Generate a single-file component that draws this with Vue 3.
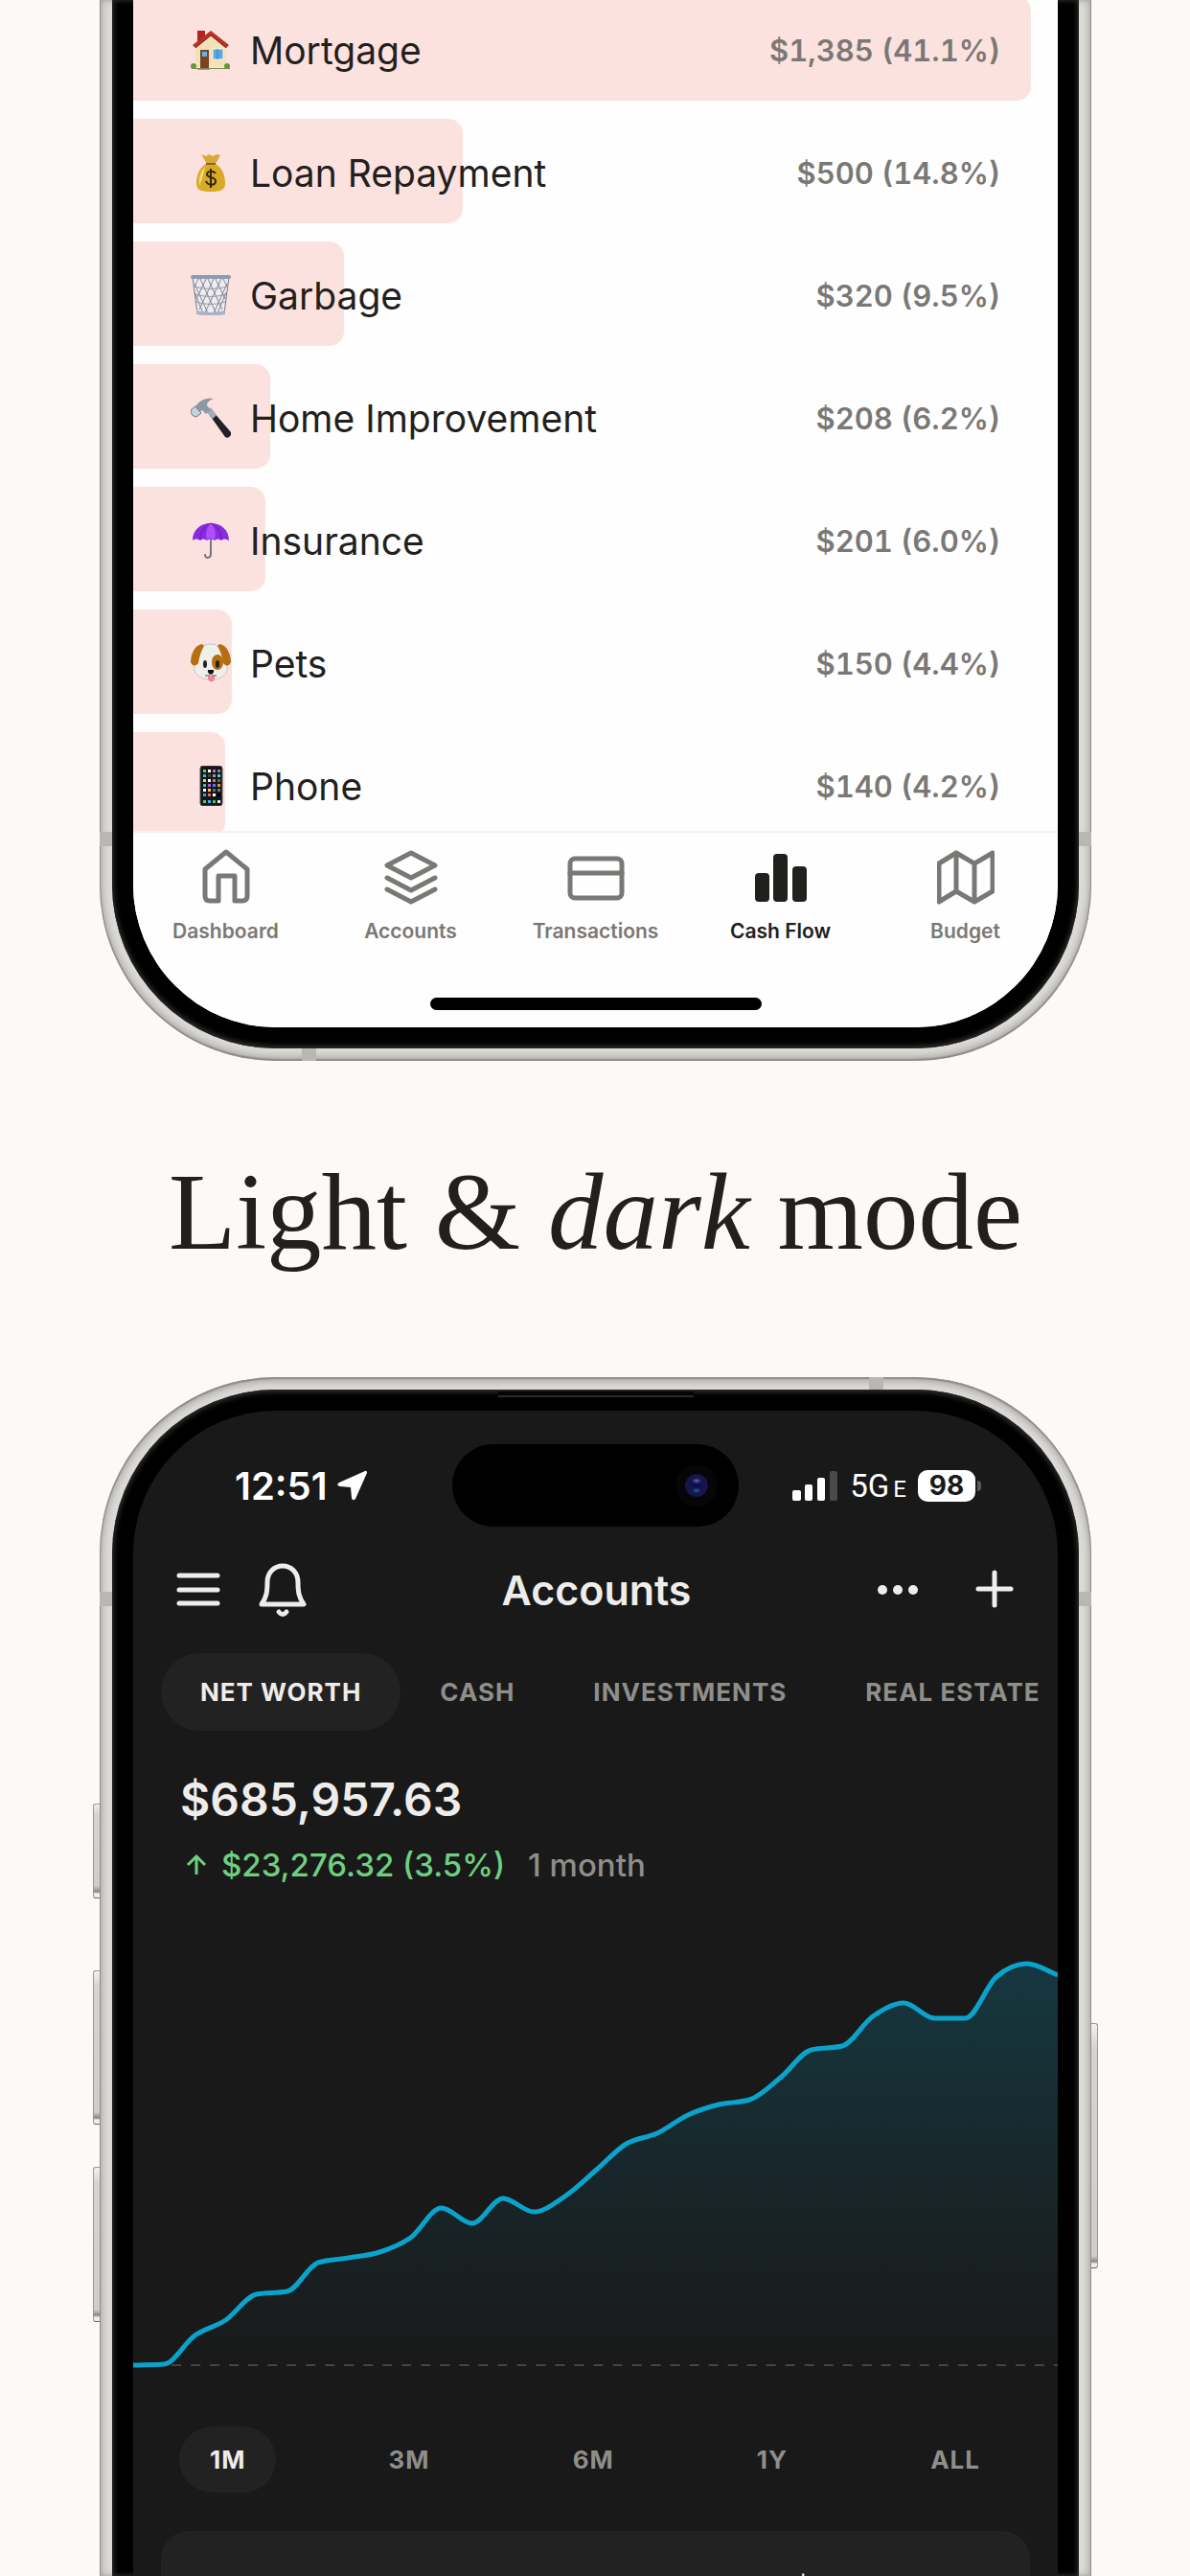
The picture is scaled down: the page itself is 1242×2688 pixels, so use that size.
<script setup>
import { computed } from "vue";

const categories = [
  { icon: "house", name: "Mortgage", amount: "$1,385 (41.1%)", bar: 97.1 },
  { icon: "money", name: "Loan Repayment", amount: "$500 (14.8%)", bar: 35.6 },
  { icon: "bin", name: "Garbage", amount: "$320 (9.5%)", bar: 22.8 },
  { icon: "hammer", name: "Home Improvement", amount: "$208 (6.2%)", bar: 14.8 },
  { icon: "umbrella", name: "Insurance", amount: "$201 (6.0%)", bar: 14.3 },
  { icon: "dog", name: "Pets", amount: "$150 (4.4%)", bar: 10.7 },
  { icon: "phone", name: "Phone", amount: "$140 (4.2%)", bar: 9.9 },
];

const navItems = ["Dashboard", "Accounts", "Transactions", "Cash Flow", "Budget"];
const activeNav = "Cash Flow";

const tabs = ["NET WORTH", "CASH", "INVESTMENTS", "REAL ESTATE"];
const activeTab = "NET WORTH";

const ranges = ["1M", "3M", "6M", "1Y", "ALL"];
const activeRange = "1M";

// App grid colours for the phone glyph
const dots = ["#4cd964", "#fff", "#b06ad0", "#888", "#3bb4f0", "#444", "#999", "#58c8d8", "#f5d742", "#fff", "#f06a5a", "#666", "#35c0d0", "#c050e0", "#3b8cf0", "#f09030", "#fff", "#f5c542", "#666", "#777", "#35a0e0", "#f06060", "#fff", "#000", "#4cd964", "#3bb4f0", "#4cc964", "#eee"];

// Net worth history, as distance above the baseline
const history = [
  0, 1, 31, 47, 74, 77, 107, 112, 118, 133, 164, 148, 174, 160, 176, 203, 231,
  242, 261, 272, 277, 300, 329, 333, 364, 378, 362, 362, 405, 419, 407,
];
const chartWidth = 964;
const baseline = 428;

// Monotone cubic interpolation through the points
const line = computed(() => {
  const step = chartWidth / (history.length - 1);
  const ys = history.map((v) => baseline - v);
  const slopes = ys.slice(1).map((y, i) => (y - ys[i]) / step);
  const tangents = ys.map((_, i) => {
    if (i === 0) return slopes[0];
    if (i === ys.length - 1) return slopes[i - 1];
    const a = slopes[i - 1];
    const b = slopes[i];
    if (a * b <= 0) return 0;
    return Math.sign(a) * Math.min(Math.abs(a), Math.abs(b), Math.abs(a + b) / 4) * 2;
  });
  let d = `M0 ${ys[0]}`;
  for (let i = 1; i < ys.length; i++) {
    const x0 = (i - 1) * step;
    const x1 = i * step;
    const c0 = ys[i - 1] + (tangents[i - 1] * step) / 3;
    const c1 = ys[i] - (tangents[i] * step) / 3;
    d += ` C${x0 + step / 3} ${c0} ${x1 - step / 3} ${c1} ${x1} ${ys[i]}`;
  }
  return d;
});
</script>

<template>
  <main class="page">
    <section class="phone phone-light">
      <span class="band band-left"></span>
      <span class="band band-right"></span>
      <span class="band band-bottom"></span>
      <div class="bezel">
        <div class="screen">
          <ul class="categories">
            <li v-for="item in categories" :key="item.name" class="category">
              <span class="category-bar" :style="{ width: item.bar + '%' }"></span>
              <svg class="glyph" viewBox="0 0 42 42" aria-hidden="true">
                <g v-if="item.icon === 'house'">
                  <rect x="7" y="1" width="8" height="13" fill="#b3261e" />
                  <path d="M21 4 5 18v21h32V18z" fill="#f3e2b8" />
                  <path d="M21 1 2 16l3 3L21 6l16 13 3-3z" fill="#b8302a" />
                  <path d="M5 19 21 6l16 13" fill="none" stroke="#7e1d18" />
                  <rect x="10" y="21" width="9" height="19" fill="#7c4120" />
                  <rect x="12" y="23" width="5" height="5" fill="#65b4ee" />
                  <rect x="23" y="20" width="11" height="11" fill="#5aa9e6" stroke="#fff6dc" />
                  <path d="M28 20v11" stroke="#3b7fbd" />
                  <path d="M9 40h11v2H7z" fill="#999" />
                  <circle cx="3" cy="38" r="3" fill="#5f9a32" />
                  <circle cx="38" cy="38" r="3" fill="#5f9a32" />
                  <path d="M1 40h40v1H1z" fill="#7a8a5a" />
                </g>
                <g v-else-if="item.icon === 'money'">
                  <path d="M11 2l5 2 3-2 4 2 4-2 4 1-5 9h-9z" fill="#d6a93e" />
                  <path d="M16 12h10c7 4 10 12 10 20 0 7-4 9-15 9S6 39 6 32c0-8 3-16 10-20z" fill="#d9a928" />
                  <path d="M15 15c-5 5-7 13-6 20 3-7 5-14 6-20z" fill="#f5dc70" />
                  <path d="M16 12h10" stroke="#8f6414" stroke-width="2" />
                  <path d="M26 22c-2-3-9-3-9 1s9 2 9 7-8 5-10 0M21 17v20" fill="none" stroke="#33280b" stroke-width="2" />
                </g>
                <g v-else-if="item.icon === 'bin'">
                  <path d="M2 2h38l-5 38q-14 3-28 0z" fill="#ececf2" />
                  <path d="M4 9l14 31M4 18l9 22M10 4l17 37M18 4l15 32M26 4l10 21M34 4l4 8M38 9 24 40M37 18l-9 22M32 4 14 41M24 4 9 36M16 4 6 25M8 4 4 12" stroke="#85858f" stroke-width="1" />
                  <path d="M4 12q17 5 34 0M5 20q16 5 32 0M6 28q15 5 30 0" fill="none" stroke="#9a9aa4" />
                  <path d="M2 2 7 40M40 2l-5 38" stroke="#777a85" />
                  <rect x="0" y="0" width="42" height="4" rx="2" fill="#8c9db3" />
                  <path d="M6 37q15 4 30 0v4q-15 3-30 0z" fill="#a6b4c8" />
                </g>
                <g v-else-if="item.icon === 'hammer'">
                  <path d="M19 17l4-3 19 22c1 4-3 7-6 5z" fill="#202226" />
                  <path d="M16 14l5-4 6 8-4 4z" fill="#a5adb7" />
                  <path d="M5 9C10 2 16 0 24 1c-5 2-7 4-7 7l4 5-5 4-4-4-4 3-5-5z" fill="#8d98a5" />
                  <path d="M0 13l5-4 6 7-5 4q-6-1-6-7z" fill="#c5d3e0" stroke="#66717e" />
                </g>
                <g v-else-if="item.icon === 'umbrella'">
                  <path d="M21 20v15c0 5-6 5-6 1" fill="none" stroke="#77747a" stroke-width="2" stroke-linecap="round" />
                  <path d="M2 21C2 10 10 3 21 3s19 7 19 18c-3-2-6-2-8 0-3-2-5-2-7 0-3-2-5-2-8 0-3-2-5-2-7 0-3-2-5-2-8 0z" fill="#8a2be2" />
                  <path d="M17 20c-2-7 0-13 4-17 4 4 6 10 4 17-3-2-5-2-8 0z" fill="#b050ff" />
                  <path d="M10 20c0-8 4-14 11-17M32 20c0-8-4-14-11-17" fill="none" stroke="#641bb0" />
                </g>
                <g v-else-if="item.icon === 'dog'">
                  <path d="M21 1c10 0 14 7 15 15s4 11 1 15c-3 5-9 7-16 7S8 36 5 31s0-7 1-15S11 1 21 1z" fill="#efefec" stroke="#c9c6c0" />
                  <path d="M12 1C4 2 0 12 0 20c2 5 6 4 8 1 1-7 3-13 6-18zM30 1c8 1 12 11 12 19-2 5-6 4-8 1-1-7-3-13-6-18z" fill="#b76d12" />
                  <ellipse cx="28" cy="20" rx="6" ry="8" fill="#b76d12" />
                  <ellipse cx="15" cy="22" rx="2" ry="4" fill="#222" />
                  <ellipse cx="28" cy="22" rx="2" ry="4" fill="#222" />
                  <path d="M18 34h7v4q-3 5-7 0z" fill="#ef8793" />
                  <path d="M18 28h6q1 3-3 5-4-2-3-5z" fill="#111" />
                  <path d="M15 34q4 1 6-2 2 3 6 2" fill="none" stroke="#555" />
                </g>
                <g v-else>
                  <rect x="10" y="0" width="23" height="42" rx="3" fill="#15151a" stroke="#555" />
                  <rect
                    v-for="(color, i) in dots"
                    :key="i"
                    :x="13 + (i % 4) * 5"
                    :y="4 + Math.floor(i / 4) * 5 + (i > 23 ? 2 : 0)"
                    width="3"
                    height="3"
                    :fill="color"
                  />
                </g>
              </svg>
              <span class="category-name">{{ item.name }}</span>
              <span class="category-amount">{{ item.amount }}</span>
            </li>
          </ul>

          <nav class="bottom-nav">
            <div class="nav-items">
              <a
                v-for="item in navItems"
                :key="item"
                href="#"
                class="nav-item"
                :class="{ active: item === activeNav }"
              >
                <svg class="nav-icon" viewBox="0 0 60 60" aria-hidden="true">
                  <path v-if="item === 'Dashboard'" d="M8 22 30 4l22 18v28q0 5-5 5h-8V29H22v26h-9q-5 0-5-5z" />
                  <g v-else-if="item === 'Accounts'">
                    <path d="M30 5 5 18l25 13 25-13z" />
                    <path d="M5 31l25 13 25-13M5 43l25 13 25-13" />
                  </g>
                  <g v-else-if="item === 'Transactions'">
                    <rect x="3" y="11" width="54" height="41" rx="5" />
                    <path d="M3 26h54" />
                  </g>
                  <g v-else-if="item === 'Cash Flow'" class="solid">
                    <rect x="3" y="26" width="15" height="30" rx="4" />
                    <rect x="22" y="6" width="15" height="50" rx="4" />
                    <rect x="42" y="19" width="15" height="37" rx="4" />
                  </g>
                  <path v-else d="M2 16 20 5l19 11L58 5v40L39 56 20 45 2 56zM20 5v40M39 16v40" />
                </svg>
                <span>{{ item }}</span>
              </a>
            </div>
            <div class="home-indicator"></div>
          </nav>
        </div>
      </div>
    </section>

    <h1 class="headline">Light &amp; <em>dark</em> mode</h1>

    <section class="phone phone-dark">
      <span class="band band-left"></span>
      <span class="band band-right"></span>
      <span class="band band-top"></span>
      <span class="side-button action"></span>
      <span class="side-button volume-up"></span>
      <span class="side-button volume-down"></span>
      <span class="side-button power"></span>
      <div class="bezel">
        <span class="earpiece"></span>
        <div class="screen">
          <div class="status-bar">
            <div class="clock">
              <span>12:51</span>
              <svg class="location" viewBox="0 0 32 32" aria-hidden="true">
                <path d="M29 1 2 13q-4 3 1 4l11 1 1 11q1 4 4 1L31 3q0-3-2-2z" />
              </svg>
            </div>
            <div class="island">
              <span class="camera"></span>
            </div>
            <div class="signal">
              <svg class="cell-bars" viewBox="0 0 47 31" aria-hidden="true">
                <rect x="0" y="20" width="9" height="11" rx="2" />
                <rect x="13" y="14" width="8" height="17" rx="2" />
                <rect x="26" y="7" width="8" height="24" rx="2" />
                <rect x="39" y="0" width="8" height="31" rx="2" class="dim" />
              </svg>
              <span class="network">5G<small>E</small></span>
              <span class="battery">98</span>
              <span class="battery-tip"></span>
            </div>
          </div>

          <header class="app-bar">
            <div class="app-actions">
              <button class="icon-button" aria-label="Menu">
                <svg viewBox="0 0 60 60"><path d="M10 15h40M10 30h40M10 44h40" /></svg>
              </button>
              <button class="icon-button" aria-label="Notifications">
                <svg viewBox="0 0 60 60">
                  <path d="M8 45c5-7 6-13 6-23 0-10 7-17 16-17s16 7 16 17c0 10 1 16 6 23z" />
                  <path d="M26 53q4 5 8 0" />
                </svg>
              </button>
            </div>
            <h2>Accounts</h2>
            <div class="app-actions end">
              <button class="icon-button" aria-label="More">
                <svg viewBox="0 0 60 60" class="more">
                  <circle cx="14" cy="30" r="5" />
                  <circle cx="30" cy="30" r="5" />
                  <circle cx="46" cy="30" r="5" />
                </svg>
              </button>
              <button class="icon-button" aria-label="Add">
                <svg viewBox="0 0 60 60"><path d="M13 29h34M30 12v34" /></svg>
              </button>
            </div>
          </header>

          <div class="tabs">
            <button v-for="tab in tabs" :key="tab" class="tab" :class="{ active: tab === activeTab }">
              {{ tab }}
            </button>
          </div>

          <div class="summary">
            <p class="total">$685,957.63</p>
            <p class="change">
              <svg class="up" viewBox="0 0 24 24" aria-hidden="true">
                <path d="M12 22V3M3 12l9-9 9 9" />
              </svg>
              <span class="gain">$23,276.32 (3.5%)</span>
              <span class="period">1 month</span>
            </p>
          </div>

          <svg class="chart" viewBox="0 0 964 440" preserveAspectRatio="none" aria-hidden="true">
            <defs>
              <linearGradient id="area" x1="0" y1="0" x2="0" y2="1">
                <stop offset="0" stop-color="#0aa3cb" stop-opacity="0.22" />
                <stop offset="0.5" stop-color="#0aa3cb" stop-opacity="0.1" />
                <stop offset="1" stop-color="#0aa3cb" stop-opacity="0" />
              </linearGradient>
            </defs>
            <path :d="line + ` V${baseline} H0 Z`" fill="url(#area)" />
            <path :d="`M0 ${baseline} H964`" class="zero" />
            <path :d="line" class="line" />
          </svg>

          <div class="ranges">
            <button
              v-for="range in ranges"
              :key="range"
              class="range"
              :class="{ active: range === activeRange }"
            >
              {{ range }}
            </button>
          </div>

          <article class="card">
            <h3>Cash</h3>
            <span>$62,485.09</span>
          </article>
        </div>
      </div>
    </section>
  </main>
</template>

<style>
body {
  margin: 0;
  background: #fbfaf8;
}
</style>

<style scoped>
.page {
  display: flex;
  flex-direction: column;
  height: 100vh;
  padding: 0 103px 0 104px;
  box-sizing: border-box;
  overflow: hidden;
  background: #fbfaf8;
  color: #22201d;
  font-family: Inter, "Liberation Sans", sans-serif;
}

ul,
p,
h1,
h2,
h3 {
  margin: 0;
  padding: 0;
}

button {
  border: 0;
  padding: 0;
  background: none;
  font: inherit;
  color: inherit;
}

/* Phone body */
.phone {
  position: relative;
  background: #dddbd8;
}

.phone-light {
  flex: none;
  padding: 0 13px 13px;
  border-radius: 0 0 184px 184px;
  box-shadow: inset 0 -1px 1px 1px #8f8d8a, inset 0 -2px 8px 2px #a5a3a0;
}

.phone-dark {
  flex: 1;
  min-height: 0;
  display: flex;
  padding: 13px 13px 0;
  border-radius: 184px 184px 0 0;
  box-shadow: inset 0 1px 1px 1px #8f8d8a, inset 0 2px 8px 2px #a5a3a0;
}

.bezel {
  position: relative;
  background: #000;
}

.phone-light .bezel {
  padding: 0 22px 22px;
  border-radius: 0 0 171px 171px;
  box-shadow: inset 0 -1px 5px 2px #2c2c2c;
}

.phone-dark .bezel {
  flex: 1;
  min-width: 0;
  display: flex;
  padding: 22px 22px 0;
  border-radius: 171px 171px 0 0;
  box-shadow: inset 0 1px 5px 2px #2c2c2c;
}

.screen {
  overflow: hidden;
}

.phone-light .screen {
  border-radius: 0 0 149px 149px;
  background: #fefefe;
}

.phone-dark .screen {
  flex: 1;
  min-width: 0;
  display: flex;
  flex-direction: column;
  border-radius: 149px 149px 0 0;
  background: #191919;
  color: #eeedeb;
}

.band {
  position: absolute;
  width: 13px;
  height: 15px;
  background: #b9b7b4;
}

.band-left {
  left: 0;
}

.band-right {
  right: 0;
}

.phone-light .band-left,
.phone-light .band-right {
  bottom: 224px;
}

.phone-dark .band-left,
.phone-dark .band-right {
  top: 224px;
}

.band-bottom,
.band-top {
  width: 15px;
  height: 13px;
}

.band-bottom {
  bottom: 0;
  left: 211px;
}

.band-top {
  top: 0;
  right: 217px;
}

.side-button {
  position: absolute;
  left: -7px;
  width: 7px;
  box-sizing: border-box;
  border: 1px solid #9a9996;
  border-right: 0;
  border-bottom-color: #666;
  border-radius: 3px 0 0 3px;
  background: linear-gradient(to top, #eee 4px, #888 6px, #cfcdca 12px, #d6d4d1 90%, #f2f2f0);
}

.action {
  top: 445px;
  height: 99px;
}

.volume-up {
  top: 619px;
  height: 161px;
}

.volume-down {
  top: 824px;
  height: 162px;
}

.power {
  left: auto;
  right: -7px;
  top: 674px;
  height: 256px;
  border: 1px solid #9a9996;
  border-left: 0;
  border-bottom-color: #666;
  border-radius: 0 3px 3px 0;
}

.earpiece {
  position: absolute;
  top: 2px;
  left: 50%;
  width: 204px;
  height: 6px;
  box-sizing: border-box;
  transform: translateX(-50%);
  border-bottom: 2px solid #2a2b29;
  background: #050505;
}

/* Cash flow list */
.categories {
  display: flex;
  flex-direction: column;
  gap: 19px;
  margin: -4px 0 -6px;
  list-style: none;
}

.category {
  position: relative;
  display: flex;
  align-items: center;
  height: 109px;
  padding: 3px 60px 0 60px;
  box-sizing: border-box;
}

.category-bar {
  position: absolute;
  inset: 0 auto 0 0;
  border-radius: 0 15px 15px 0;
  background: #fce2df;
}

.glyph {
  position: relative;
  width: 42px;
  height: 42px;
  margin-right: 20px;
}

.category-name {
  position: relative;
  flex: 1;
  font-size: 39px;
}

.category-amount {
  position: relative;
  font-size: 31px;
  font-weight: 600;
  font-variant-numeric: tabular-nums;
  color: #7a7875;
}

.bottom-nav {
  position: relative;
  display: flex;
  flex-direction: column;
  align-items: center;
  justify-content: space-between;
  height: 205px;
  padding: 16px 0 18px;
  box-sizing: border-box;
  border-top: 2px solid #f3f2f1;
  background: #fefefe;
}

.nav-items {
  display: grid;
  grid-template-columns: repeat(5, 1fr);
  width: 100%;
}

.nav-item {
  display: flex;
  flex-direction: column;
  align-items: center;
  gap: 13px;
  font-size: 21px;
  line-height: 28px;
  font-weight: 600;
  text-decoration: none;
  color: #7a7875;
}

.nav-icon {
  width: 60px;
  height: 60px;
  fill: none;
  stroke: currentColor;
  stroke-width: 5;
  stroke-linecap: round;
  stroke-linejoin: round;
}

.solid {
  fill: currentColor;
  stroke: none;
}

.nav-item.active {
  color: #22201d;
}

.home-indicator {
  width: 346px;
  height: 13px;
  border-radius: 7px;
  background: #000;
}

.headline {
  flex: none;
  height: 330px;
  font-family: "Liberation Serif", serif;
  font-size: 115px;
  font-weight: 400;
  line-height: 316px;
  text-align: center;
  white-space: nowrap;
}

/* Accounts screen */
.status-bar {
  flex: none;
  display: grid;
  grid-template-columns: 1fr 299px 1fr;
  align-items: center;
  padding: 35px 80px 0;
}

.clock {
  display: flex;
  align-items: center;
  gap: 10px;
  padding-left: 26px;
  font-size: 40px;
  font-weight: 600;
  color: #fff;
}

.location {
  width: 32px;
  height: 32px;
  fill: #fff;
}

.island {
  display: flex;
  align-items: center;
  justify-content: flex-end;
  height: 86px;
  padding-right: 32px;
  box-sizing: border-box;
  border-radius: 43px;
  background: #000;
}

.camera {
  width: 24px;
  height: 24px;
  border-radius: 50%;
  background: radial-gradient(ellipse 5px 3px at 50% 30%, #6a66b8, transparent), radial-gradient(ellipse 5px 3px at 50% 72%, #2a5a90, transparent), radial-gradient(#0c0c50, #17174a 60%, #08081c);
  box-shadow: 0 0 0 10px #060608;
}

.signal {
  display: flex;
  align-items: center;
  justify-content: flex-end;
  color: #fff;
}

.cell-bars {
  width: 47px;
  height: 31px;
  margin-right: 13px;
  fill: #fff;
}

.dim {
  fill: #4a4a4a;
}

.network {
  margin-right: 12px;
  font-family: Roboto, sans-serif;
  font-size: 33px;
}

.network small {
  margin-left: 4px;
  font-size: 24px;
}

.battery {
  width: 60px;
  height: 33px;
  border-radius: 10px;
  background: #fff;
  color: #191919;
  font-size: 28px;
  line-height: 33px;
  font-weight: 700;
  text-align: center;
}

.battery-tip {
  width: 4px;
  height: 11px;
  margin-left: 2px;
  border-radius: 0 4px 4px 0;
  background: #5c5c5c;
}

.app-bar {
  flex: none;
  display: grid;
  grid-template-columns: 1fr auto 1fr;
  align-items: center;
  height: 132px;
  padding: 0 36px 0 38px;
}

.app-bar h2 {
  font-size: 43px;
  font-weight: 600;
}

.app-actions {
  display: flex;
  gap: 28px;
}

.app-actions.end {
  justify-content: flex-end;
  gap: 41px;
}

.icon-button {
  width: 60px;
  height: 60px;
}

.icon-button svg {
  display: block;
  width: 60px;
  height: 60px;
  fill: none;
  stroke: #eeedeb;
  stroke-width: 5;
  stroke-linecap: round;
  stroke-linejoin: round;
}

.icon-button .more {
  fill: #eeedeb;
  stroke: none;
}

.tabs {
  flex: none;
  display: flex;
  padding-left: 29px;
  overflow: hidden;
}

.tab {
  flex: none;
  height: 81px;
  padding: 0 41px;
  border-radius: 41px;
  font-size: 26px;
  font-weight: 700;
  letter-spacing: 1px;
  color: #8f8e8b;
}

.tab.active,
.range.active {
  background: #222;
  color: #eeedeb;
}

.summary {
  flex: none;
  padding: 42px 49px 0;
}

.total {
  font-size: 48px;
  line-height: 60px;
  font-weight: 600;
}

.change {
  display: flex;
  align-items: center;
  margin-top: 17px;
  padding-left: 5px;
  font-size: 33px;
  line-height: 42px;
  font-weight: 500;
}

.up {
  width: 24px;
  height: 24px;
  margin-right: 14px;
  fill: none;
  stroke: #6fcf80;
  stroke-width: 3;
}

.gain {
  margin-right: 24px;
  color: #6fcf80;
}

.period {
  color: #8f8e8b;
}

.chart {
  flex: none;
  display: block;
  width: 100%;
  height: 440px;
  margin-top: 73px;
}

.line {
  fill: none;
  stroke: #0aa3cb;
  stroke-width: 5;
  stroke-linejoin: round;
}

.zero {
  stroke: #444;
  stroke-width: 2;
  stroke-dasharray: 10 10;
}

.ranges {
  flex: none;
  display: flex;
  justify-content: space-between;
  margin-top: 52px;
  padding: 0 49px 0 48px;
}

.range {
  height: 69px;
  padding: 0 32px;
  border-radius: 35px;
  font-size: 26px;
  font-weight: 700;
  letter-spacing: 1px;
  color: #8f8e8b;
}

.card {
  flex: none;
  display: flex;
  justify-content: space-between;
  margin: 40px 29px 0;
  padding: 39px 46px;
  border-radius: 29px;
  background: #222;
  font-size: 36px;
  line-height: 44px;
  font-weight: 500;
}

.card h3 {
  font-size: 36px;
  font-weight: 500;
}
</style>
